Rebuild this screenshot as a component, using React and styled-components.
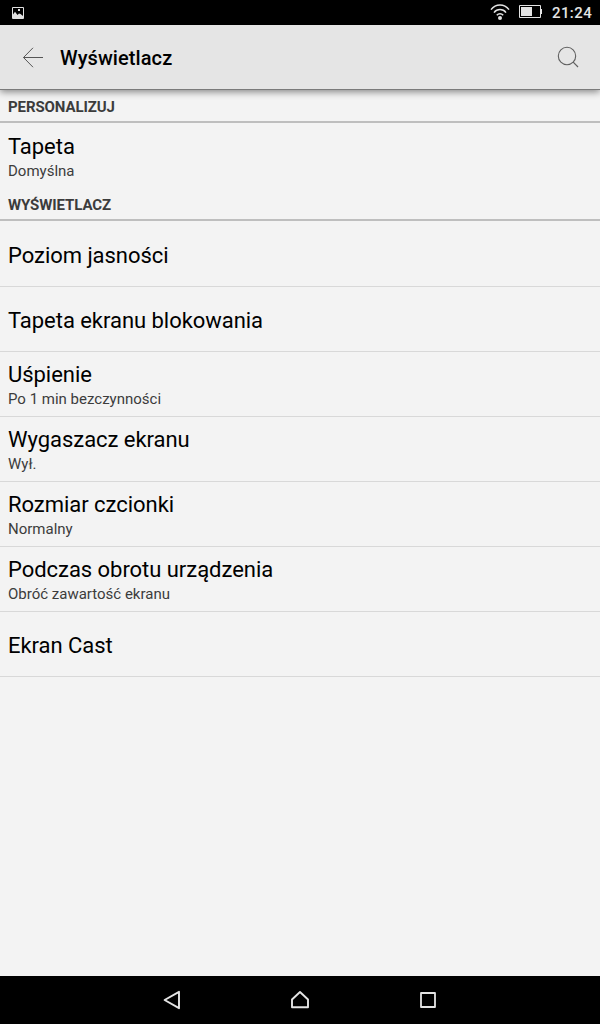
import React, {Component} from "react";
import styled, {createGlobalStyle} from "styled-components";

const GlobalStyle = createGlobalStyle`
  body {
    margin: 0;
    background-color: #f3f3f3;
    font-family: Roboto, sans-serif;
  }
`;

const Screen = styled.div`
  display: flex;
  flex-direction: column;
  width: 600px;
  height: 1024px;
  overflow: hidden;
  background-color: #f3f3f3;
`;

const StatusBar = styled.div`
  display: flex;
  flex: none;
  align-items: center;
  height: 25px;
  padding: 0 8px 0 12px;
  background-color: #000000;
`;

const StatusIcons = styled.div`
  display: flex;
  align-items: center;
  margin-left: auto;
`;

const Clock = styled.div`
  width: 40px;
  height: 25px;
  margin-left: 9px;
  font-size: 15px;
  font-weight: 500;
  line-height: 27px;
  letter-spacing: 0.4px;
  white-space: nowrap;
  color: #e4e4e4;
`;

const Toolbar = styled.div`
  display: flex;
  flex: none;
  align-items: center;
  box-sizing: border-box;
  height: 65px;
  padding: 0 20px;
  background-color: #e5e5e5;
  border-bottom: 1px solid #7a7a7a;
  box-shadow: 0 2px 7px rgba(0, 0, 0, 0.45);
  z-index: 1;
`;

const ToolbarTitle = styled.div`
  flex: 1;
  margin-left: 16px;
  padding-top: 2px;
  font-size: 20px;
  font-weight: 500;
  letter-spacing: 0.08px;
  color: #000000;
`;

const SettingsList = styled.div`
  flex: 1;
  padding-top: 1px;
`;

const SectionTitle = styled.div`
  box-sizing: border-box;
  height: 32px;
  margin-bottom: 1px;
  padding: 0 8px;
  font-size: 15px;
  font-weight: 700;
  line-height: 32px;
  letter-spacing: -0.1px;
  color: #3c3c3c;
  border-bottom: 2px solid #bebebe;
`;

const Row = styled.div`
  display: flex;
  flex-direction: column;
  justify-content: center;
  box-sizing: border-box;
  height: 65px;
  padding: 3px 8px 0;
  border-bottom: 1px solid ${props => props.$last ? "transparent" : "#d8d8d8"};
`;

const RowTitle = styled.div`
  font-size: 22px;
  line-height: 26px;
  letter-spacing: -0.04px;
  color: #000000;
`;

const RowSummary = styled.div`
  font-size: 15px;
  line-height: 16px;
  padding-top: 3px;
  padding-bottom: 3px;
  color: #3c3c3c;
`;

const NavBar = styled.div`
  display: flex;
  flex: none;
  align-items: center;
  justify-content: center;
  gap: 104px;
  height: 48px;
  background-color: #000000;
`;

const Icon = styled.svg`
  display: block;
  flex: none;
  fill: none;
`;

const display = [
  {title: "Poziom jasności"},
  {title: "Tapeta ekranu blokowania"},
  {title: "Uśpienie", summary: "Po 1 min bezczynności"},
  {title: "Wygaszacz ekranu", summary: "Wył."},
  {title: "Rozmiar czcionki", summary: "Normalny"},
  {title: "Podczas obrotu urządzenia", summary: "Obróć zawartość ekranu"},
  {title: "Ekran Cast"},
];

class Setting extends Component {
  render() {
    return (
      <Row $last={this.props.last}>
        <RowTitle>{this.props.title}</RowTitle>
        {this.props.summary && <RowSummary>{this.props.summary}</RowSummary>}
      </Row>
    );
  }
}

class App extends Component {
  render() {
    return (
      <Screen>
        <GlobalStyle />
        <StatusBar>
          <Icon width="12" height="25" viewBox="0 0 12 25">
            <path d="M0.5 7.5H11.5V18.5H0.5Z" stroke="#e0e0e0" />
            <path d="M1 14.5L3 11.8L5.5 15L7 13.5L8.5 14L11 16V18H1Z" fill="#e0e0e0" />
            <path d="M6 9H8V11H6Z" fill="#e0e0e0" />
          </Icon>
          <StatusIcons>
            <Icon width="20" height="25" viewBox="0 0 20 25">
              <path d="M1 9.6C5.8 3.5 14.2 3.5 19 9.6M4 12.6C7 8.6 13 8.6 16 12.6M6.8 15.3C8.5 13.3 11.5 13.3 13.2 15.3" stroke="#e4e4e4" strokeWidth="1.5" />
              <circle cx="10" cy="18" r="2" fill="#e4e4e4" />
            </Icon>
            <Icon width="33" height="25" viewBox="0 0 33 25">
              <path d="M9.5 5.5H30.5V17.5H9.5Z" stroke="#e4e4e4" />
              <path d="M11 7H22V16H11ZM31 9H32V14H31Z" fill="#e4e4e4" />
            </Icon>
            <Clock>21:24</Clock>
          </StatusIcons>
        </StatusBar>
        <Toolbar>
          <Icon width="24" height="24" viewBox="0 0 24 24">
            <path d="M3.5 12.5H23M13 2.8L3.5 12.5L13 22.2" stroke="#555555" />
          </Icon>
          <ToolbarTitle>Wyświetlacz</ToolbarTitle>
          <Icon width="24" height="24" viewBox="0 0 24 24">
            <circle cx="11" cy="11" r="8.7" stroke="#606060" strokeWidth="1.1" />
            <path d="M17.2 17.2L22 22" stroke="#606060" strokeWidth="1.2" />
          </Icon>
        </Toolbar>
        <SettingsList>
          <SectionTitle>PERSONALIZUJ</SectionTitle>
          <Setting title="Tapeta" summary="Domyślna" last />
          <SectionTitle>WYŚWIETLACZ</SectionTitle>
          {display.map(item => <Setting key={item.title} {...item} />)}
        </SettingsList>
        <NavBar>
          <Icon width="24" height="24" viewBox="0 0 24 24">
            <path d="M19 3.8V20.2L4.6 12Z" stroke="#e4e4e4" strokeWidth="1.9" strokeLinejoin="round" />
          </Icon>
          <Icon width="24" height="24" viewBox="0 0 24 24">
            <path d="M4 19.2V11.5L12 4L20 11.5V19.2Z" stroke="#e4e4e4" strokeWidth="1.9" strokeLinejoin="round" />
          </Icon>
          <Icon width="24" height="24" viewBox="0 0 24 24">
            <path d="M5 5H19V19H5Z" stroke="#e4e4e4" strokeWidth="1.8" strokeLinejoin="round" />
          </Icon>
        </NavBar>
      </Screen>
    );
  }
}

export default App;
